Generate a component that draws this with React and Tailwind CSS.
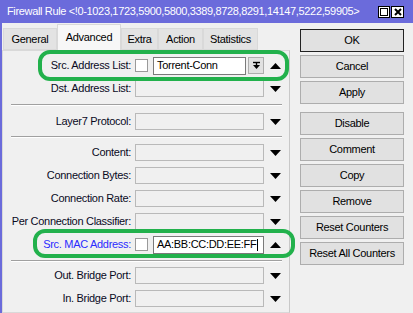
import React from "react";

const Down = () => (
  <svg width="11" height="6" viewBox="0 0 11 6">
    <path d="M0 0h11L5.5 6z" fill="#000" />
  </svg>
);

const Up = () => (
  <svg width="11" height="6" viewBox="0 0 11 6">
    <path d="M0 6h11L5.5 0z" fill="#000" />
  </svg>
);

const Sep = ({ my }) => (
  <div className={my}>
    <div className="ml-[8px] w-[271px] h-px bg-[#a0a0a0]" />
    <div className="ml-[8px] w-[271px] h-px bg-white" />
  </div>
);

const Row = ({ label, blue, children, up }) => (
  <div className="flex h-[23px] items-center">
    <div
      className={
        blue
          ? "w-[129px] pr-[1px] text-right text-[#2b2bff]"
          : "w-[129px] pr-[1px] text-right text-[#0a0a1e]"
      }
    >
      {label}
    </div>
    <div className="ml-[3px] flex w-[129px] items-center">
      {children || (
        <div className="h-[17px] w-[129px] border border-[#b9b9b9] bg-[#f0f0f0]" />
      )}
    </div>
    <div className="ml-[6px] flex w-[11px] items-center">{up ? <Up /> : <Down />}</div>
  </div>
);

const Check = () => (
  <div className="h-[13px] w-[13px] shrink-0 border border-[#9a9a9a] bg-white" />
);

const Tab = ({ label, w, active }) =>
  active ? (
    <div
      className={`${w} -mb-px flex h-[27px] items-center justify-center border border-b-0 border-[#d9d9d9] bg-[#f7f7f7] pb-[2px]`}
    >
      {label}
    </div>
  ) : (
    <div
      className={`${w} flex h-[22px] items-center justify-center border border-[#d9d9d9] bg-[#e3e3e3]`}
    >
      {label}
    </div>
  );

const Btn = ({ label, ok }) => (
  <div
    className={
      ok
        ? "flex h-[23px] w-[104px] items-center justify-center border border-[#222] bg-[#e1e1e1] text-black"
        : "flex h-[23px] w-[104px] items-center justify-center border border-[#adadad] bg-[#e1e1e1] text-black"
    }
  >
    {label}
  </div>
);

export default function App() {
  return (
    <div className="relative h-[313px] w-[413px] overflow-hidden bg-[#f0f0f0] font-['Liberation_Sans',Arial,sans-serif] text-[11px] tracking-[-0.3px] text-black">
      <div className="flex h-[23px] items-center bg-[#6b6bdb] pl-[7px] pr-[9px]">
        <div className="flex-1 whitespace-nowrap text-[11px] tracking-[-0.35px] text-white">
          Firewall Rule &lt;!0-1023,1723,5900,5800,3389,8728,8291,14147,5222,59905&gt;
        </div>
        <div className="flex gap-[1px]">
          <div className="flex h-[12px] w-[12px] items-center justify-center border border-black bg-white">
            <div className="h-[8px] w-[8px] border border-black" />
          </div>
          <div className="flex h-[12px] w-[13px] items-center justify-center border border-black bg-white">
            <svg width="8" height="8" viewBox="0 0 8 8">
              <path d="M1 1l6 6M7 1L1 7" stroke="#000" strokeWidth="2" />
            </svg>
          </div>
        </div>
      </div>

      <div className="flex h-[290px] border-l-2 border-[#6b6bdb]">
        <div className="w-[288px]">
          <div className="flex h-[27px] items-end pl-[1px]">
            <Tab label="General" w="w-[54px]" />
            <Tab label="Advanced" w="w-[64px]" active />
            <Tab label="Extra" w="w-[37px]" />
            <Tab label="Action" w="w-[45px]" />
            <Tab label="Statistics" w="w-[55px]" />
          </div>
          <div className="h-[263px] border border-r-[#c8c8c8] border-[#d9d9d9] bg-[#f0f0f0] pt-[3px]">
            <Row label="Src. Address List:" up>
              <Check />
              <div className="ml-[5px] flex h-[18px] w-[93px] items-center border border-[#7a7a7a] bg-white pl-[3px]">
                Torrent-Conn
              </div>
              <div className="ml-[2px] flex h-[17px] w-[16px] items-center justify-center border border-[#adadad] bg-[#e1e1e1]">
                <svg width="9" height="9" viewBox="0 0 9 9">
                  <path d="M1 1.5h7" stroke="#000" strokeWidth="1.4" />
                  <path d="M1 4h7L4.5 8z" fill="#000" />
                  <path d="M4.5 2v3" stroke="#000" strokeWidth="1.4" />
                </svg>
              </div>
            </Row>
            <Row label="Dst. Address List:" />
            <Sep my="my-[4px]" />
            <Row label="Layer7 Protocol:" />
            <Sep my="my-[3px]" />
            <Row label="Content:" />
            <Row label="Connection Bytes:" />
            <Row label="Connection Rate:" />
            <Row label="Per Connection Classifier:" />
            <Row label="Src. MAC Address:" blue up>
              <Check />
              <div className="ml-[5px] flex h-[18px] w-[111px] items-center border border-[#7a7a7a] bg-white pl-[3px]">
                AA:BB:CC:DD:EE:FF
                <span className="ml-[1px] h-[12px] w-px bg-black" />
              </div>
            </Row>
            <Sep my="mt-[4px] mb-[2px]" />
            <Row label="Out. Bridge Port:" />
            <Row label="In. Bridge Port:" />
          </div>
        </div>

        <div className="ml-[10px] flex flex-col pt-[6px]">
          <div className="flex flex-col gap-[3px]">
            <Btn label="OK" ok />
            <Btn label="Cancel" />
            <Btn label="Apply" />
          </div>
          <div className="mt-[8px] flex flex-col gap-[3px]">
            <Btn label="Disable" />
            <Btn label="Comment" />
            <Btn label="Copy" />
            <Btn label="Remove" />
            <Btn label="Reset Counters" />
            <Btn label="Reset All Counters" />
          </div>
        </div>
      </div>

      <div className="absolute left-[38px] top-[50px] h-[31px] w-[251px] rounded-[12px] border-4 border-[#22b14c]" />
      <div className="absolute left-[33px] top-[229px] h-[29px] w-[262px] rounded-[12px] border-4 border-[#22b14c]" />
    </div>
  );
}
